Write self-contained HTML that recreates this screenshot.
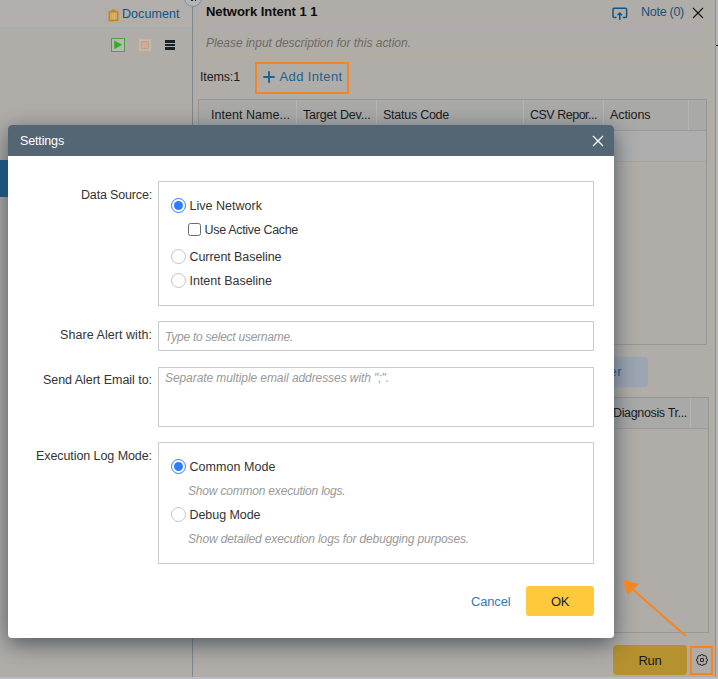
<!DOCTYPE html>
<html lang="en">
<head>
<meta charset="utf-8">
<title>Settings</title>
<style>
html,body{margin:0;padding:0;}
body{width:718px;height:679px;overflow:hidden;position:relative;background:#b0ada8;font-family:"Liberation Sans",sans-serif;}
.abs{position:absolute;}
.t{position:absolute;white-space:pre;line-height:16px;font-family:"Liberation Sans",sans-serif;}
.hl{position:absolute;height:1px;background:#bea785;}
.tbl{position:absolute;box-sizing:border-box;border:1px solid #979695;}
.cd{position:absolute;width:1px;background:#b6b5b4;}
.fs{position:absolute;box-sizing:border-box;border:1px solid #cccccc;background:#fff;}
.radio{position:absolute;width:15px;height:15px;box-sizing:border-box;border-radius:50%;border:1px solid #c4c4c4;background:#fff;}
.radio.on{border:1.5px solid #2d7dff;}
.radio.on::after{content:"";position:absolute;left:1.5px;top:1.5px;width:9px;height:9px;border-radius:50%;background:#2d7dff;}
</style>
</head>
<body>
<!-- background page (dimmed) -->
<div class="abs" style="left:0;top:0;width:192px;height:27px;background:#b2aeab;"></div>
<div class="hl" style="left:0;top:27px;width:192px;background:#c4a586;"></div>
<div class="hl" style="left:194px;top:27px;width:521px;background:#bfaa92;"></div>
<div class="hl" style="left:194px;top:54px;width:521px;background:#bfaa92;"></div>
<div class="abs" style="left:192.3px;top:0;width:1.2px;height:679px;background:#7f878e;"></div>
<!-- collapse handle -->
<div class="abs" style="left:184px;top:-11.3px;width:18px;height:18px;box-sizing:border-box;border:1.2px solid #6d93b3;border-radius:50%;background:#b7b6b4;"></div>
<div class="abs" style="left:191px;top:0;width:1.5px;height:1.2px;background:#222;"></div>
<div class="abs" style="left:194.8px;top:0;width:1.5px;height:1.2px;background:#222;"></div>
<!-- right scrollbar edge -->
<div class="abs" style="left:715px;top:0;width:1px;height:679px;background:#8f8f8f;"></div>
<div class="abs" style="left:716px;top:0;width:2px;height:679px;background:#b6b6b5;"></div>
<div class="abs" style="left:716px;top:44.8px;width:2px;height:1.2px;background:#0a0a0a;"></div>

<!-- document icon -->
<svg class="abs" style="left:107.5px;top:8.5px" width="11" height="13" viewBox="0 0 11 13">
<rect x="0.5" y="2" width="10" height="10.3" rx="0.8" fill="#c48719"/>
<rect x="3.6" y="0.5" width="3.8" height="3" rx="0.8" fill="#c48719"/>
<rect x="2" y="3.6" width="7" height="7" fill="#d3a763"/>
<rect x="4.6" y="3.6" width="0.8" height="7" fill="#dcb983"/>
<rect x="6.4" y="3.6" width="0.8" height="7" fill="#dcb983"/>
</svg>
<!-- play / stop / menu -->
<div class="abs" style="left:111px;top:38px;width:14px;height:14px;box-sizing:border-box;border:1px solid #4c9f47;background:#bab8b3;"></div>
<svg class="abs" style="left:111px;top:38px" width="14" height="14" viewBox="0 0 14 14"><path d="M3.2 2.4 L11.2 6.8 L3.2 11.2 Z" fill="#37ac27"/></svg>
<div class="abs" style="left:138px;top:38px;width:14px;height:14px;box-sizing:border-box;border:1px solid #c4a999;background:#bcb9b5;"></div>
<div class="abs" style="left:141px;top:41px;width:8px;height:8px;box-sizing:border-box;background:#d6aa92;border:1px solid #c99b88;border-radius:1px;"></div>
<div class="abs" style="left:164.8px;top:40px;width:10.2px;height:2.7px;background:#1c2328;"></div>
<div class="abs" style="left:164.8px;top:43.8px;width:10.2px;height:2.3px;background:#1c2328;"></div>
<div class="abs" style="left:164.8px;top:47.3px;width:10.2px;height:2.7px;background:#1c2328;"></div>

<!-- share icon, close X -->
<svg class="abs" style="left:612px;top:6.7px" width="16" height="14" viewBox="0 0 16 14" fill="none" stroke="#17557f" stroke-width="1.5">
<path d="M4.5 10.5 H2 a1 1 0 0 1 -1 -1 V2.2 a1 1 0 0 1 1 -1 H13.6 a1 1 0 0 1 1 1 V9.5 a1 1 0 0 1 -1 1 H11"/>
<path d="M7.8 13 V6.2 M5.6 8.2 L7.8 6 L10 8.2"/>
</svg>
<svg class="abs" style="left:692px;top:7px" width="12" height="12" viewBox="0 0 12 12" stroke="#111" stroke-width="1.1"><path d="M1 1 L11 11 M11 1 L1 11"/></svg>

<!-- add intent highlight -->
<div class="abs" style="left:255px;top:62px;width:94px;height:32px;box-sizing:border-box;border:2px solid #f5851f;border-radius:1px;"></div>
<svg class="abs" style="left:263px;top:71px" width="12" height="12" viewBox="0 0 12 12" stroke="#20608e" stroke-width="1.9"><path d="M6 0.3 V11.7 M0.3 6 H11.7"/></svg>

<!-- table 1 -->
<div class="tbl" style="left:198px;top:99px;width:509px;height:246px;"></div>
<div class="abs" style="left:199px;top:100px;width:507px;height:30px;background:#a9a9a8;"></div>
<div class="abs" style="left:199px;top:130px;width:507px;height:1px;background:#9c9b9a;"></div>
<div class="abs" style="left:199px;top:131px;width:507px;height:30px;background:#aeaeae;"></div>
<div class="abs" style="left:199px;top:161px;width:507px;height:1px;background:#a5a4a2;"></div>
<div class="cd" style="left:296px;top:100px;height:30px;"></div>
<div class="cd" style="left:376px;top:100px;height:30px;"></div>
<div class="cd" style="left:523px;top:100px;height:30px;"></div>
<div class="cd" style="left:603px;top:100px;height:30px;"></div>
<div class="cd" style="left:688px;top:100px;height:30px;"></div>

<!-- filter button -->
<div class="abs" style="left:560px;top:357px;width:88px;height:30px;border-radius:4px;background:#9ca5b2;"></div>

<!-- table 2 -->
<div class="tbl" style="left:198px;top:397px;width:511px;height:236px;"></div>
<div class="abs" style="left:199px;top:398px;width:509px;height:30px;background:#a9a9a8;"></div>
<div class="abs" style="left:199px;top:428px;width:509px;height:1px;background:#9c9b9a;"></div>
<div class="cd" style="left:690px;top:398px;height:30px;"></div>

<!-- run button & gear -->
<div class="abs" style="left:613px;top:645px;width:74px;height:30px;border-radius:4px;background:#b5912f;"></div>
<div class="abs" style="left:690px;top:646px;width:23px;height:29px;box-sizing:border-box;border:2px solid #f5851f;"></div>
<svg class="abs" style="left:695px;top:652.8px" width="14" height="14" viewBox="0 0 14 14" fill="none" stroke="#0e0e0e" stroke-width="0.85" stroke-linejoin="miter">
<rect x="5.5" y="5.5" width="3" height="3" rx="0.5"/>
<path d="M11.07 8.68 A1.7 1.7 0 0 1 8.68 11.07 A1.7 1.7 0 0 1 5.32 11.07 A1.7 1.7 0 0 1 2.93 8.68 A1.7 1.7 0 0 1 2.93 5.32 A1.7 1.7 0 0 1 5.32 2.93 A1.7 1.7 0 0 1 8.68 2.93 A1.7 1.7 0 0 1 11.07 5.32 A1.7 1.7 0 0 1 11.07 8.68 Z"/>
</svg>

<!-- bottom edge -->
<div class="abs" style="left:0;top:677px;width:718px;height:2px;background:#b9bcc4;"></div>

<span class="t" style="left:122.0px;top:5.67px;font-size:12.5px;letter-spacing:0.064px;color:#15527c;">Document</span>
<span class="t" style="left:206.0px;top:3.70px;font-size:13px;letter-spacing:-0.026px;color:#0c0c0c;font-weight:700;">Network Intent 1 1</span>
<span class="t" style="left:206.0px;top:35.24px;font-size:12px;letter-spacing:-0.011px;color:#6d6a66;font-style:italic;">Please input description for this action.</span>
<span class="t" style="left:200.0px;top:68.67px;font-size:12.5px;letter-spacing:-0.143px;color:#1c1c1c;">Items:1</span>
<span class="t" style="left:279.5px;top:68.70px;font-size:13px;letter-spacing:0.372px;color:#24608c;">Add Intent</span>
<span class="t" style="left:211.0px;top:106.87px;font-size:12.5px;letter-spacing:0.035px;color:#1a1a1a;">Intent Name...</span>
<span class="t" style="left:303.0px;top:106.87px;font-size:12.5px;letter-spacing:-0.188px;color:#1a1a1a;">Target Dev...</span>
<span class="t" style="left:383.0px;top:106.87px;font-size:12.5px;letter-spacing:-0.254px;color:#1a1a1a;">Status Code</span>
<span class="t" style="left:530.0px;top:106.87px;font-size:12.5px;letter-spacing:-0.496px;color:#1a1a1a;">CSV Repor...</span>
<span class="t" style="left:610.0px;top:106.87px;font-size:12.5px;letter-spacing:-0.071px;color:#1a1a1a;">Actions</span>
<span class="t" style="left:641.0px;top:4.07px;font-size:12.5px;letter-spacing:-0.270px;color:#15527c;">Note (0)</span>
<span class="t" style="left:590.0px;top:363.50px;font-size:13px;letter-spacing:0.518px;color:#1f5c8a;">Filter</span>
<span class="t" style="left:613.0px;top:404.67px;font-size:12.5px;letter-spacing:-0.347px;color:#1a1a1a;">Diagnosis Tr...</span>
<span class="t" style="left:638.4px;top:652.50px;font-size:13px;letter-spacing:-0.253px;color:#1a1a1a;">Run</span>


<!-- dialog -->
<div class="abs" style="left:8px;top:125px;width:606px;height:513px;border-radius:4px;background:#fff;box-shadow:0 6px 22px rgba(28,42,56,.66);overflow:hidden;">
  <div style="height:31px;background:#546674;"></div>
</div>
<svg class="abs" style="left:592px;top:134.5px" width="12" height="12" viewBox="0 0 12 12" stroke="#fff" stroke-width="1.3"><path d="M1 1 L11 11 M11 1 L1 11"/></svg>

<div class="fs" style="left:158px;top:181px;width:436px;height:125px;"></div>
<div class="fs" style="left:158px;top:321px;width:436px;height:30px;"></div>
<div class="fs" style="left:158px;top:367px;width:436px;height:60px;"></div>
<div class="fs" style="left:158px;top:442px;width:436px;height:122px;"></div>

<div class="radio on" style="left:171px;top:198px;"></div>
<div class="abs" style="left:188px;top:223px;width:13px;height:13px;box-sizing:border-box;border:1px solid #6b6b6b;border-radius:2.5px;background:#fff;"></div>
<div class="radio" style="left:171px;top:248.5px;"></div>
<div class="radio" style="left:171px;top:272.5px;"></div>
<div class="radio on" style="left:171px;top:459px;"></div>
<div class="radio" style="left:171px;top:507px;"></div>

<div class="abs" style="left:526px;top:586px;width:68px;height:30px;border-radius:3px;background:#ffc93c;"></div>

<!-- blue strip left -->
<div class="abs" style="left:0;top:160px;width:8px;height:37px;background:#1c5379;"></div>
<span class="t" style="left:20.0px;top:133.17px;font-size:12.5px;letter-spacing:-0.146px;color:#ffffff;">Settings</span>
<span class="t" style="left:81.0px;top:186.67px;font-size:12.5px;letter-spacing:-0.164px;color:#333333;">Data Source:</span>
<span class="t" style="left:60.0px;top:326.67px;font-size:12.5px;letter-spacing:0.058px;color:#333333;">Share Alert with:</span>
<span class="t" style="left:43.0px;top:371.67px;font-size:12.5px;letter-spacing:-0.039px;color:#333333;">Send Alert Email to:</span>
<span class="t" style="left:36.0px;top:447.77px;font-size:12.5px;letter-spacing:-0.076px;color:#333333;">Execution Log Mode:</span>
<span class="t" style="left:189.5px;top:197.67px;font-size:12.5px;letter-spacing:0.021px;color:#333333;">Live Network</span>
<span class="t" style="left:204.5px;top:221.67px;font-size:12.5px;letter-spacing:-0.323px;color:#333333;">Use Active Cache</span>
<span class="t" style="left:189.5px;top:248.67px;font-size:12.5px;letter-spacing:-0.069px;color:#333333;">Current Baseline</span>
<span class="t" style="left:189.5px;top:272.67px;font-size:12.5px;letter-spacing:-0.014px;color:#333333;">Intent Baseline</span>
<span class="t" style="left:165.0px;top:328.84px;font-size:12px;letter-spacing:-0.243px;color:#999999;font-style:italic;">Type to select username.</span>
<span class="t" style="left:165.0px;top:370.34px;font-size:12px;letter-spacing:-0.077px;color:#999999;font-style:italic;">Separate multiple email addresses with &quot;;&quot;.</span>
<span class="t" style="left:189.5px;top:458.67px;font-size:12.5px;letter-spacing:0.050px;color:#333333;">Common Mode</span>
<span class="t" style="left:188.0px;top:482.84px;font-size:12px;letter-spacing:-0.194px;color:#999999;font-style:italic;">Show common execution logs.</span>
<span class="t" style="left:189.5px;top:506.67px;font-size:12.5px;letter-spacing:-0.058px;color:#333333;">Debug Mode</span>
<span class="t" style="left:188.0px;top:530.84px;font-size:12px;letter-spacing:-0.139px;color:#999999;font-style:italic;">Show detailed execution logs for debugging purposes.</span>
<span class="t" style="left:471.0px;top:593.50px;font-size:13px;letter-spacing:-0.161px;color:#3a78b3;">Cancel</span>
<span class="t" style="left:551.0px;top:593.50px;font-size:13px;letter-spacing:-0.398px;color:#222222;">OK</span>
<!-- arrow -->
<svg class="abs" style="left:0;top:0" width="718" height="679" viewBox="0 0 718 679">
<path d="M685.5 635.8 L631 588" stroke="#f5851f" stroke-width="2" fill="none"/>
<path d="M622.6 580 L638.6 584 L627.7 595 Z" fill="#f5851f"/>
</svg>

</body>
</html>
